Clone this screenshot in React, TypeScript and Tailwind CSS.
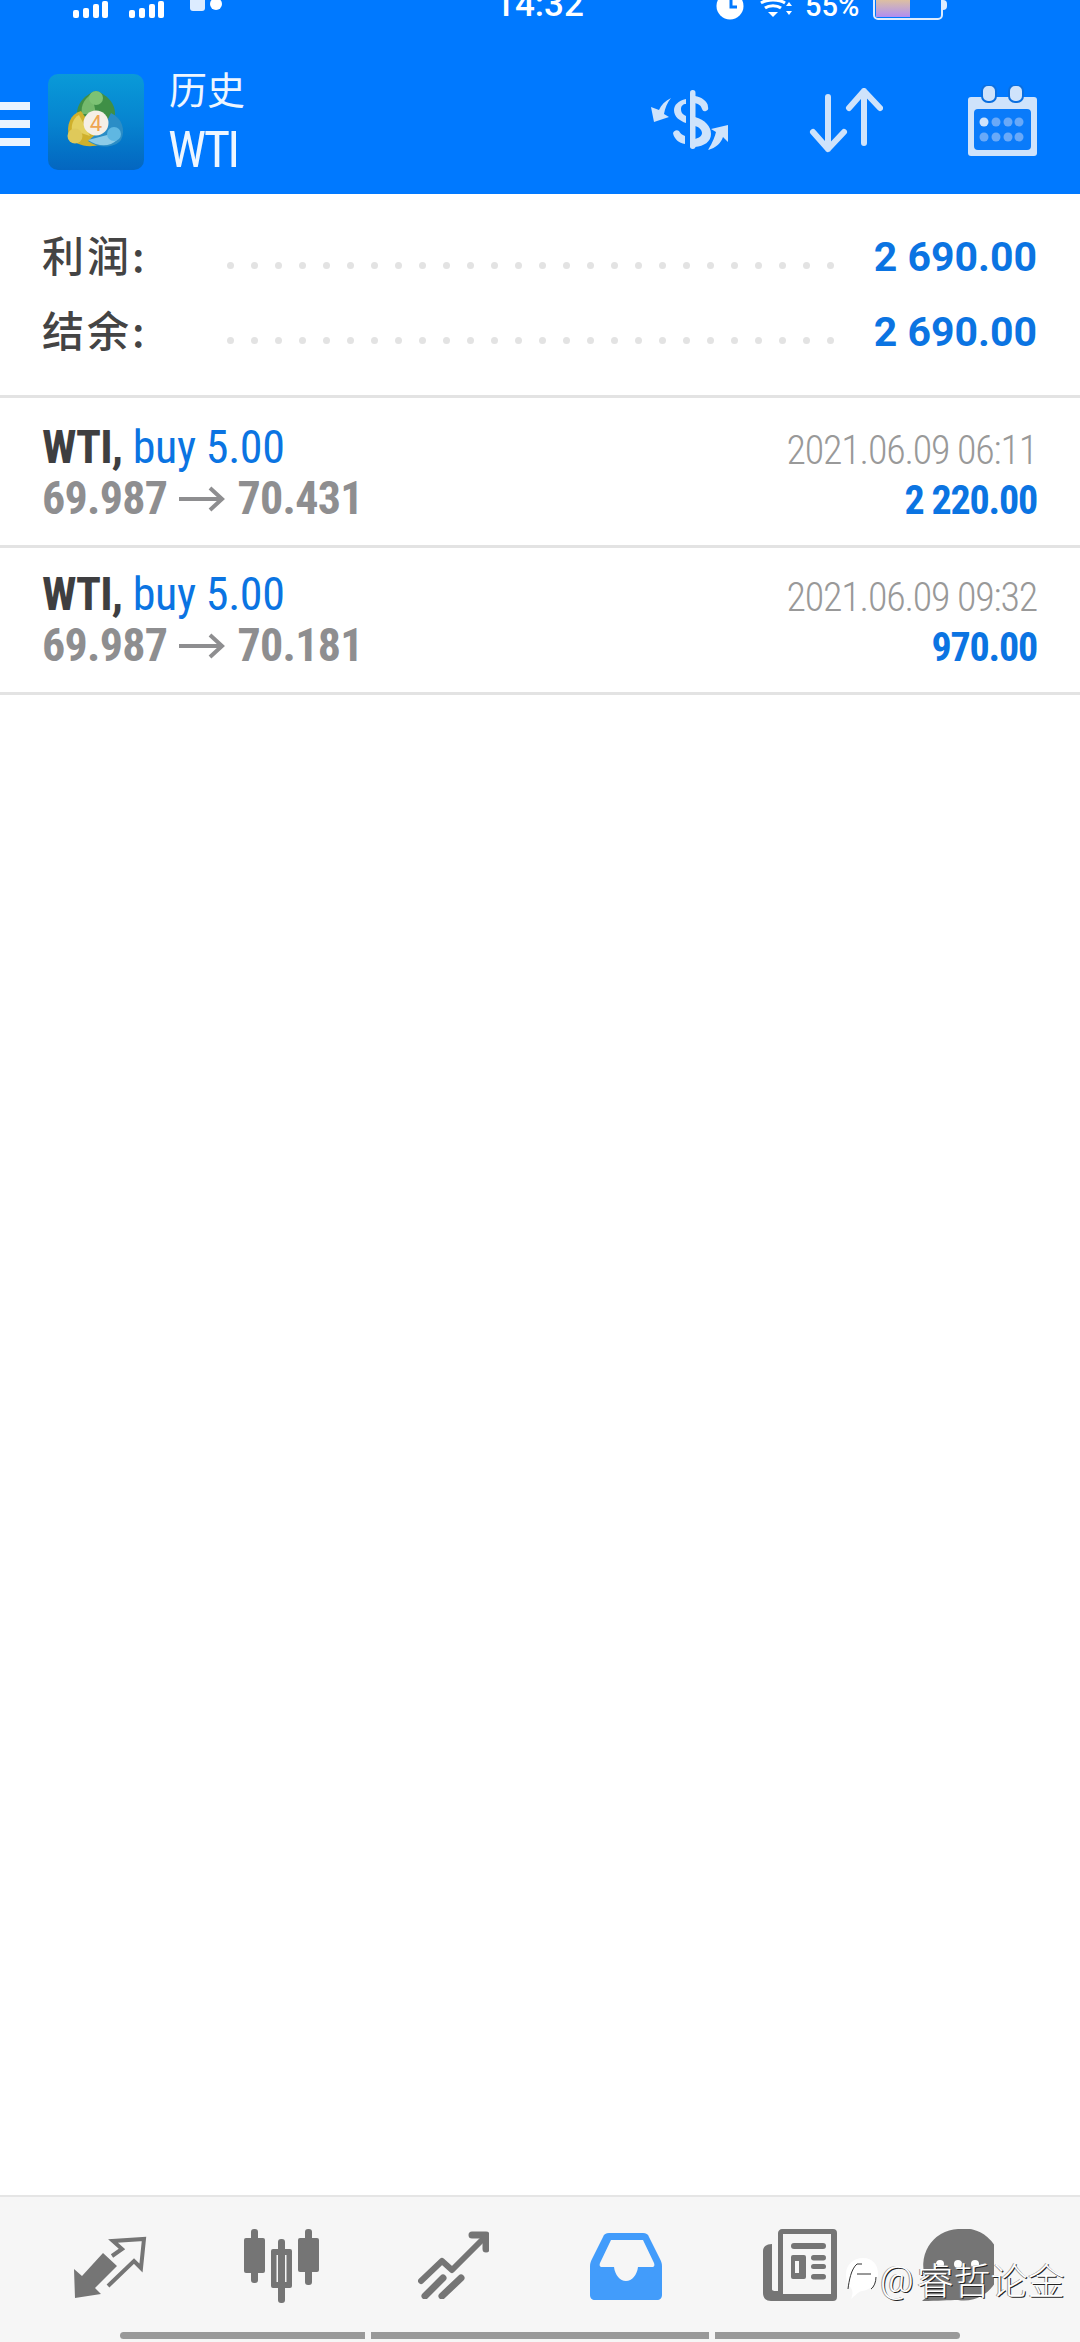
const cjk = "font-['Noto_Sans_CJK_SC',sans-serif]";
const cond = "font-['Roboto',sans-serif] [font-stretch:75%]";

const trades = [
  { open: '69.987', close: '70.431', time: '2021.06.09 06:11', profit: '2 220.00' },
  { open: '69.987', close: '70.181', time: '2021.06.09 09:32', profit: '970.00' },
];

const stats = [
  { label: '利润:', value: '2 690.00' },
  { label: '结余:', value: '2 690.00' },
];

function Signal() {
  return (
    <svg width="36" height="18" viewBox="0 0 36 18" fill="#fff">
      <rect x="0" y="10" width="6" height="8" rx="2" />
      <rect x="10" y="8" width="6" height="10" rx="2" />
      <rect x="20" y="4" width="6" height="14" rx="2" />
      <rect x="29" y="1" width="6" height="17" rx="2" />
    </svg>
  );
}

function StatusBar() {
  return (
    <div className="relative h-[22px] overflow-hidden text-white">
      <div className="absolute left-[73px] bottom-[4px] flex gap-[20px]">
        <Signal />
        <Signal />
      </div>
      <div className="absolute left-[190px] bottom-[11px] h-[14px] w-[15px] rounded-[3px] bg-[#dcecff]" />
      <div className="absolute left-[210px] bottom-[12px] h-[12px] w-[12px] rounded-full bg-white" />
      <div className="absolute left-[495px] bottom-0 font-['Roboto',sans-serif] text-[35px] leading-none font-medium">
        14:32
      </div>
      <svg className="absolute left-[716px] bottom-[2px]" width="28" height="28" viewBox="0 0 28 28">
        <circle cx="14" cy="14" r="13.5" fill="#fff" />
        <path d="M15 6v9h6" stroke="#0078fe" strokeWidth="3" fill="none" />
      </svg>
      <svg className="absolute left-[760px] bottom-[3px]" width="34" height="20" viewBox="0 0 34 20" fill="none" stroke="#fff" strokeWidth="3">
        <path d="M1 4c6-4 18-4 24 0M5 9c4-3 12-3 16 0" />
        <path d="M8 13l5 5 5-5z" fill="#fff" stroke="none" />
        <path d="M26 7l3-4 3 4zM26 12l3 4 3-4z" fill="#fff" stroke="none" />
      </svg>
      <div className="absolute left-[805px] bottom-[1px] font-['Roboto',sans-serif] text-[29px] leading-none font-medium">
        55%
      </div>
      <div className="absolute left-[873px] -top-[12px] h-[32px] w-[70px] rounded-[5px] border-2 border-[#dcecff] p-[1px]">
        <div className="h-full w-[34px] bg-gradient-to-b from-[#f8d45c] to-[#b08cf0]" />
      </div>
      <div className="absolute left-[943px] top-0 h-[10px] w-[4px] rounded-r-sm bg-[#dcecff]" />
    </div>
  );
}

function Mt4Logo() {
  return (
    <div className="h-[96px] w-[96px] rounded-[10px] bg-gradient-to-b from-[#0a9ad8] via-[#0784d0] to-[#0466c0]">
      <svg width="96" height="96" viewBox="0 0 96 96">
        <path d="M48 17c-13 4-22 16-18 28 3 6 33 6 36 0 4-12-5-24-18-28z" fill="#3f8f46" />
        <path d="M34 40c-2-9 4-17 10-20l4 20z" fill="#74b96c" />
        <circle cx="48" cy="24" r="7" fill="#7cc274" />
        <path d="M33 37C22 40 18 52 21 62c5 9 20 13 32 8L42 50z" fill="#cfb02c" />
        <path d="M31 41c-6 3-8 11-7 15l18 6z" fill="#e4d05f" />
        <circle cx="27" cy="62" r="7.5" fill="#dfc95a" />
        <path d="M63 39c11 5 15 17 10 27-6 8-22 9-33 1l16-14z" fill="#2b8dc6" />
        <path d="M40 66c10 7 22 7 29 0l-6-6z" fill="#8ccbe8" />
        <circle cx="66" cy="60" r="7" fill="#5fb7e2" />
        <circle cx="48" cy="49" r="12.5" fill="#f5efe6" />
        <text x="48" y="57" textAnchor="middle" fontSize="22" fontFamily="Roboto" fill="#eea552">
          4
        </text>
      </svg>
    </div>
  );
}

function SwapIcon() {
  return (
    <svg width="78" height="62" viewBox="0 0 78 62" fill="#cfe3fb">
      <rect x="39" y="0" width="5.5" height="59" rx="2.7" />
      <path d="M44 6c6 1 13 5 13 11a3 3 0 01-6 2c-1-4-4-5-7-6z" />
      <path fillRule="evenodd" d="M44 27c10 3 16 9 16 17s-7 12-16 13zm0 9v13c4-1 7-3 7-6s-3-6-7-7z" />
      <path d="M35 9c-8 2-12 6-12 11 0 7 6 11 12 13v-7c-4-2-5-4-5-7s2-5 5-5z" />
      <path d="M22 43a4 4 0 016-2c1 2 3 4 6 5v8c-6-1-11-5-12-11z" />
      <path d="M20 8c-6 3-10 7-12 12l-8-3 3 15 15-5-5-3c1-6 3-11 7-16z" />
      <path d="M57 60c5-8 7-14 8-18l-5-3 17-4v17l-5-5c-2 6-7 11-15 13z" />
    </svg>
  );
}

function SortIcon() {
  return (
    <svg width="74" height="66" viewBox="0 0 74 66" fill="none" stroke="#cfe3fb" strokeWidth="6" strokeLinecap="round" strokeLinejoin="round">
      <path d="M19 9v52M4 44l15 17 16-17" />
      <path d="M55 3v52M40 20L55 3l16 17" />
    </svg>
  );
}

function CalendarIcon() {
  return (
    <svg width="69" height="72" viewBox="0 0 69 72">
      <rect x="0" y="12" width="69" height="59" rx="3" fill="#cfe3fb" />
      <rect x="6" y="24" width="57" height="41" rx="4" fill="#0a7bfa" />
      <rect x="14" y="0" width="14" height="17" rx="6" fill="#cfe3fb" stroke="#0a6fe0" strokeWidth="2" />
      <rect x="41" y="0" width="14" height="17" rx="6" fill="#cfe3fb" stroke="#0a6fe0" strokeWidth="2" />
      <circle cx="16" cy="37" r="4.5" fill="#cfe3fb" />
      {[28, 40, 51].map((cx) => (
        <circle key={cx} cx={cx} cy="37" r="4.5" fill="#69a9f8" />
      ))}
      {[16, 28, 40, 51].map((cx) => (
        <circle key={cx} cx={cx} cy="52" r="4.5" fill="#69a9f8" />
      ))}
    </svg>
  );
}

function Header() {
  return (
    <div className="h-[194px] shrink-0 bg-[#0079ff]">
      <StatusBar />
      <div className="relative flex h-[172px] items-start pt-[52px]">
        <div className="mt-[28px] flex w-[30px] flex-col gap-[10px]">
          <div className="h-[8px] bg-[#eaf4ff]" />
          <div className="h-[8px] bg-[#eaf4ff]" />
          <div className="h-[8px] bg-[#eaf4ff]" />
        </div>
        <div className="ml-[18px]">
          <Mt4Logo />
        </div>
        <div className="ml-[25px] text-[#eef6ff]">
          <div className={`${cjk} -mt-[12px] text-[38px] leading-[52px]`}>历史</div>
          <div className={`${cond} mt-[7px] -ml-[1px] text-[50px] leading-[58px] tracking-[-2.5px]`}>WTI</div>
        </div>
        <div className="absolute left-[651px] top-[68px]">
          <SwapIcon />
        </div>
        <div className="absolute left-[809px] top-[66px]">
          <SortIcon />
        </div>
        <div className="absolute left-[968px] top-[63px]">
          <CalendarIcon />
        </div>
      </div>
    </div>
  );
}

function Summary() {
  return (
    <div className="shrink-0 border-b-[3px] border-[#e3e3e3] pr-[43px] pl-[42px] pt-[26px] pb-[25px]">
      {stats.map((row) => (
        <div key={row.label} className="flex h-[75px] items-center">
          <div className={`${cjk} -mt-[9px] w-[185px] text-[42px] font-medium tracking-[3px] text-[#444]`}>{row.label}</div>
          <div className="mt-[16px] flex w-[607px] justify-between">
            {Array.from({ length: 26 }).map((_, i) => (
              <div key={i} className="h-[7px] w-[7px] rounded-full bg-[#e3e3e3]" />
            ))}
          </div>
          <div className="ml-auto font-['Roboto',sans-serif] text-[41px] font-bold text-[#0b74e2]">
            {row.value}
          </div>
        </div>
      ))}
    </div>
  );
}

function TradeRow({ open, close, time, profit }: (typeof trades)[number]) {
  return (
    <div className="flex h-[147px] items-center justify-between border-b-[3px] border-[#e3e3e3] pr-[43px] pl-[42px]">
      <div>
        <div className={`${cond} text-[46px] leading-[51px]`}>
          <span className="font-bold tracking-[-0.8px] text-[#3e3e40]">WTI,</span>{' '}
          <span className="tracking-[-0.4px] text-[#0b74e2]">buy 5.00</span>
        </div>
        <div className={`${cond} flex items-center gap-[12px] text-[46px] leading-[51px] font-bold tracking-[-0.7px] text-[#8e8e90]`}>
          {open}
          <svg width="46" height="28" viewBox="0 0 46 28" fill="none" stroke="#8e8e90" strokeWidth="4">
            <path d="M0 14h42M31 3l12 11-12 11" />
          </svg>
          {close}
        </div>
      </div>
      <div className="mt-[6px] text-right">
        <div className={`${cond} text-[40px] leading-[50px] font-light tracking-[-1.2px] text-[#999]`}>{time}</div>
        <div className={`${cond} text-[40px] leading-[50px] font-bold tracking-[-1.2px] text-[#0b74e2]`}>{profit}</div>
      </div>
    </div>
  );
}

function BottomNav() {
  return (
    <div className="relative flex h-[147px] shrink-0 flex-col border-t-[2px] border-[#e5e5e5] bg-[#f6f6f6]">
      <div className="relative h-[135px]">
        {/* markets */}
        <svg className="absolute left-[74px] top-[38px]" width="73" height="64" viewBox="0 0 73 64">
          <path d="M1 63L0 34l8 7 21-23 14 13-22 22 6 6z" fill="#757575" />
          <path d="M34 51l26-25 7 7 3-29-31 2 9 8-10 7" fill="none" stroke="#757575" strokeWidth="4" />
        </svg>
        {/* candles */}
        <svg className="absolute left-[244px] top-[32px]" width="75" height="75" viewBox="0 0 75 75" fill="#757575">
          <rect x="7" y="0" width="7" height="54" rx="3" />
          <rect x="0" y="9" width="21" height="35" rx="2" />
          <rect x="34" y="10" width="7" height="64" rx="3" />
          <path fillRule="evenodd" d="M29 20h17a2 2 0 012 2v35a2 2 0 01-2 2H29a2 2 0 01-2-2V22a2 2 0 012-2zm3.500 6v27h10V26z" />
          <rect x="61" y="0" width="7" height="56" rx="3" />
          <rect x="54" y="9" width="21" height="34" rx="2" />
        </svg>
        {/* trend */}
        <svg className="absolute left-[418px] top-[34px]" width="71" height="68" viewBox="0 0 71 68" fill="none" stroke="#757575" strokeWidth="6" strokeLinecap="round" strokeLinejoin="round">
          <path d="M3 50l21-20 10 9 33-33" />
          <path d="M54 4h14v14" strokeWidth="7" />
          <path d="M7 65l18-18M24 65l19-18" strokeWidth="7" />
        </svg>
        {/* history */}
        <svg className="absolute left-[590px] top-[36px]" width="72" height="67" viewBox="0 0 72 67" fill="#429cfb">
          <path fillRule="evenodd" d="M19 0h34c3 0 5 1 6 4l11 22c1 2 2 4 2 7v29c0 3-2 5-5 5H5c-3 0-5-2-5-5V33c0-3 1-5 2-7L13 4c1-3 3-4 6-4zm2 7L10 30c-1 3 0 4 3 4h11c1 8 6 14 12 14s11-6 12-14h13c3 0 4-1 3-4L53 7z" />
        </svg>
        {/* news */}
        <svg className="absolute left-[763px] top-[32px]" width="74" height="72" viewBox="0 0 74 72" fill="#757575">
          <path fillRule="evenodd" d="M19 0h51a4 4 0 014 4v64a4 4 0 01-4 4H8c-5 0-8-3-8-8V22c0-4 3-7 9-7v45c0 2 2 2 6 2V4c0-2 2-4 4-4zm1 5v60h48V5z" />
          <rect x="28" y="14" width="35" height="6" rx="3" />
          <path fillRule="evenodd" d="M30 26h11a2 2 0 012 2v20a2 2 0 01-2 2H30a2 2 0 01-2-2V28a2 2 0 012-2zm2 6v12h4V32z" />
          <rect x="48" y="26" width="15" height="5.500" rx="2.700" />
          <rect x="48" y="35" width="15" height="5" rx="2.500" />
          <rect x="48" y="45" width="15" height="5.500" rx="2.700" />
        </svg>
        {/* chat */}
        <svg className="absolute left-[922px] top-[32px]" width="72" height="72" viewBox="0 0 72 72" fill="#757575">
          <path d="M36 0a36 36 0 110 71c-9 0-20 1-36 1 6-4 7-10 5-20A36 36 0 0136 0z" />
          <circle cx="18" cy="35" r="4" fill="#fff" />
          <circle cx="36" cy="35" r="4" fill="#fff" />
          <circle cx="53" cy="35" r="4" fill="#fff" />
        </svg>
        <div className="absolute left-[845px] top-[60px] flex items-center text-[37px] leading-none font-light text-white [text-shadow:1px_1px_0_#222,-1px_0_0_#999]">
          <svg width="34" height="44" viewBox="0 0 34 44">
            <path d="M18 1C28 1 33 8 33 17c0 10-8 16-16 17-3 0-6 4-11 8 2-5 2-8 0-11C2 27 1 22 1 17 1 8 8 1 18 1z" fill="#fff" />
            <path d="M3 32c1-8 3-20 9-25h5M12 17h14M26 32c3-2 5-7 5-12" fill="none" stroke="#333" strokeWidth="1" />
          </svg>
          <span className="ml-[1px] font-['Roboto',sans-serif] font-light">@</span>
          <span className={`${cjk} ml-[3px] font-light`}>睿哲论金</span>
        </div>
      </div>
      <div className="ml-[120px] flex gap-[6px]">
        <div className="h-[7px] w-[245px] rounded-l-full bg-[#999]" />
        <div className="h-[7px] w-[338px] bg-[#999]" />
        <div className="h-[7px] w-[245px] rounded-r-full bg-[#999]" />
      </div>
    </div>
  );
}

export default function App() {
  return (
    <div className="flex h-[2342px] w-[1080px] flex-col overflow-hidden bg-white">
      <Header />
      <Summary />
      <div className="flex-1 pt-[3px]">
        {trades.map((t) => (
          <TradeRow key={t.time} {...t} />
        ))}
      </div>
      <BottomNav />
    </div>
  );
}
